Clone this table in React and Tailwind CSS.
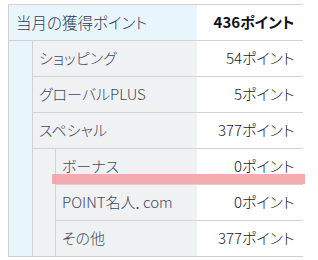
export default function App() {
  const font = {
    fontFamily: '"Noto Sans CJK JP", "Liberation Sans", sans-serif',
  };
  const lbl = "h-[36px] pl-[6px] text-[15px] font-light text-[#3f4a5e] [font-feature-settings:'palt'] border-t border-[#d2d2d2] bg-[#f0f1f3] whitespace-nowrap";
  const val = "h-[36px] pr-[8px] text-right text-[15px] font-light text-[#1a1a1a] [font-feature-settings:'palt'] border-t border-[#d2d2d2] bg-white whitespace-nowrap";
  return (
    <div className="relative w-[318px] h-[260px] bg-white" style={font}>
      <div className="pt-[4px] pl-[8px]">
        <table className="border-collapse table-fixed w-[294px] border-l border-b border-[#cfcfcf]">
          <colgroup>
            <col className="w-[24px]" />
            <col className="w-[23px]" />
            <col className="w-[141px]" />
            <col className="w-[106px]" />
          </colgroup>
          <tbody>
            <tr>
              <td colSpan={3} className="h-[36px] pl-[7px] text-[15.5px] font-light text-[#2f394c] [font-feature-settings:'palt'] border-t border-[#d2d2d2] bg-[#e9f5fd] whitespace-nowrap">
                当月の獲得ポイント
              </td>
              <td className="h-[36px] pr-[8px] text-right text-[15px] font-bold text-[#111122] [font-feature-settings:'palt'] border-t border-[#d2d2d2] bg-white whitespace-nowrap">
                436ポイント
              </td>
            </tr>
            <tr>
              <td rowSpan={6} className="bg-[#e9f5fd] border-t border-r border-[#d2d2d2]"></td>
              <td colSpan={2} className={lbl}>ショッピング</td>
              <td className={val}>54ポイント</td>
            </tr>
            <tr>
              <td colSpan={2} className={lbl}>グローバルPLUS</td>
              <td className={val}>5ポイント</td>
            </tr>
            <tr>
              <td colSpan={2} className={lbl}>スペシャル</td>
              <td className={val}>377ポイント</td>
            </tr>
            <tr>
              <td rowSpan={3} className="bg-[#f0f1f3] border-t border-r border-[#d2d2d2]"></td>
              <td className={lbl}>ボーナス</td>
              <td className={val}>0ポイント</td>
            </tr>
            <tr>
              <td className={lbl}>POINT名人．com</td>
              <td className={val}>0ポイント</td>
            </tr>
            <tr>
              <td className={lbl}>その他</td>
              <td className={val}>377ポイント</td>
            </tr>
          </tbody>
        </table>
      </div>
      <div className="absolute left-[52px] top-[174px] w-[253px] h-[10px] bg-[#f4a3a6] opacity-90"></div>
    </div>
  );
}
